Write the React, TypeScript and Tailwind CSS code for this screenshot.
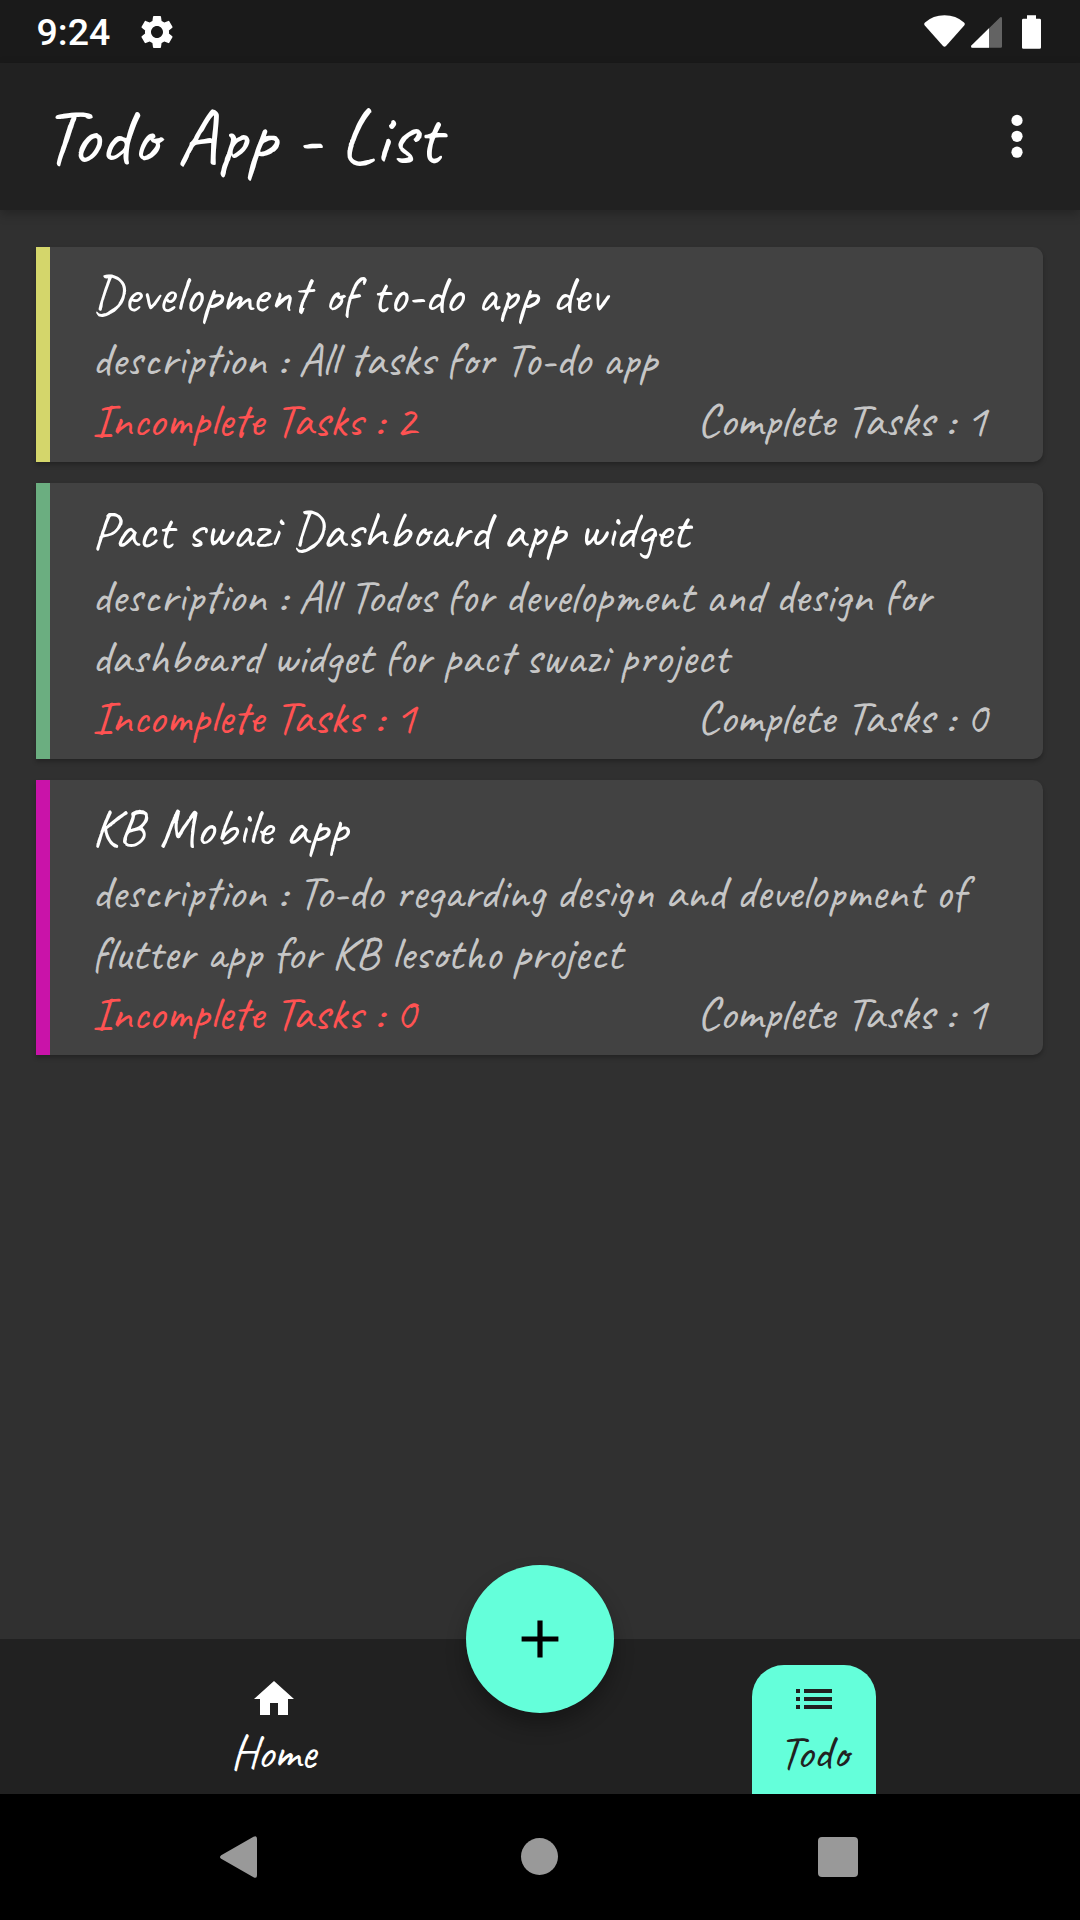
import React from "react";

type Todo = {
  bar: string;
  height: string;
  titleClass: string;
  countsClass: string;
  title: string;
  lines: string[];
  incomplete: number;
  complete: number;
};

const todos: Todo[] = [
  {
    bar: "bg-[#d4d66b]",
    height: "h-[215px]",
    titleClass: "leading-[68px] [word-spacing:1.2px]",
    countsClass: "",
    title: "Development of to-do app dev",
    lines: ["description : All tasks for To-do app"],
    incomplete: 2,
    complete: 1,
  },
  {
    bar: "bg-[#6bae80]",
    height: "h-[276px]",
    titleClass: "leading-[69px] [word-spacing:0.3px]",
    countsClass: "-mt-px",
    title: "Pact swazi Dashboard app widget",
    lines: [
      "description : All Todos for development and design for",
      "dashboard widget for pact swazi project",
    ],
    incomplete: 1,
    complete: 0,
  },
  {
    bar: "bg-[#c913a9]",
    height: "h-[275px]",
    titleClass: "leading-[68px]",
    countsClass: "-mt-px",
    title: "KB Mobile app",
    lines: [
      "description : To-do regarding design and development of",
      "flutter app for KB lesotho project",
    ],
    incomplete: 0,
    complete: 1,
  },
];

function TodoCard({ todo }: { todo: Todo }) {
  return (
    <article
      className={`flex ${todo.height} w-[1007px] rounded-r-[10px] bg-[#424242] shadow-[0_3px_4px_rgba(0,0,0,0.25)]`}
    >
      <div className={`w-[14px] ${todo.bar}`} />
      <div className="flex-1 pt-[14px] pr-[56px] pl-[42px] text-[47.25px] leading-[61px] whitespace-nowrap text-[#c6c6c6]">
        <h2 className={`text-[52.5px] font-medium text-white ${todo.titleClass}`}>{todo.title}</h2>
        {todo.lines.map((line) => (
          <p key={line}>{line}</p>
        ))}
        <div className={`flex justify-between ${todo.countsClass}`}>
          <span className="text-[#ff5252]">Incomplete Tasks : {todo.incomplete}</span>
          <span>Complete Tasks : {todo.complete}</span>
        </div>
      </div>
    </article>
  );
}

function StatusBar() {
  return (
    <div className="flex h-[63px] items-center bg-[#1a1a1a] pr-[39px] pl-[36.5px] text-white">
      <span className="w-[73px] pt-[2px] font-['Roboto'] text-[37.5px] leading-[61px] font-medium">9:24</span>
      <svg className="ml-[27.5px] h-[40px] w-[40px]" viewBox="0 0 24 24" fill="currentColor">
        <path d="M19.14 12.94c.04-.3.06-.61.06-.94 0-.32-.02-.64-.07-.94l2.03-1.58a.49.49 0 0 0 .12-.61l-1.92-3.32a.488.488 0 0 0-.59-.22l-2.39.96c-.5-.38-1.03-.7-1.62-.94l-.36-2.54a.484.484 0 0 0-.48-.41h-3.84c-.24 0-.43.17-.47.41l-.36 2.54c-.59.24-1.13.57-1.62.94l-2.39-.96c-.22-.08-.47 0-.59.22L2.74 8.87c-.12.21-.08.47.12.61l2.03 1.58c-.05.3-.09.63-.09.94s.02.64.07.94l-2.03 1.58a.49.49 0 0 0-.12.61l1.92 3.32c.12.22.37.29.59.22l2.39-.96c.5.38 1.03.7 1.62.94l.36 2.54c.05.24.24.41.48.41h3.84c.24 0 .44-.17.47-.41l.36-2.54c.59-.24 1.13-.56 1.62-.94l2.39.96c.22.08.47 0 .59-.22l1.92-3.32c.12-.22.07-.47-.12-.61l-2.01-1.58zM12 15.6c-1.98 0-3.6-1.62-3.6-3.6s1.62-3.6 3.6-3.6 3.6 1.62 3.6 3.6-1.62 3.6-3.6 3.6z" />
      </svg>
      <svg className="ml-auto h-[34px] w-[117px]" viewBox="924 14 117 34" fill="currentColor">
        <path d="M925 21.5Q933 14.3 944.5 14.3T964 21.5Q965.5 23 964.2 24.5L946 45Q944.5 46.6 943 45L924.8 24.5Q923.5 23 925 21.5Z" />
        <path d="M1002 17.5v28q0 1.3-1.3 1.3H972.5q-2.5-.3-.8-2.5L1000 16.5q1.7-1.2 2 1Z" opacity=".32" />
        <path d="M989 27.3V46.8H972.5q-2.5-.3-.8-2.5Z" />
        <path d="M1027 14.2h9v3.600h3.600q1.400 0 1.400 1.400v27.200q0 1.400-1.400 1.400h-16.200q-1.400 0-1.400-1.400V19.200q0-1.400 1.400-1.400h3.600Z" />
      </svg>
    </div>
  );
}

export default function App() {
  return (
    <div className="flex h-[1920px] w-[1080px] flex-col overflow-hidden bg-[#303030] font-['Caveat','Lato',cursive]">
      <StatusBar />
      <header className="z-10 flex h-[147px] items-center justify-between bg-[#212121] pr-[57px] pl-[42px] shadow-[0_4px_10px_rgba(0,0,0,0.25)]">
        <h1 className="pt-px text-[78.75px] leading-[146px] font-medium whitespace-nowrap text-white">
          Todo App - List
        </h1>
        <svg className="-mt-px h-[44px] w-[12px]" viewBox="0 0 12 44" fill="white">
          <circle cx="6" cy="6.4" r="5.6" />
          <circle cx="6" cy="22.3" r="5.6" />
          <circle cx="6" cy="38.2" r="5.6" />
        </svg>
      </header>

      <main className="flex flex-1 flex-col gap-[21px] pt-[37px] pl-[36px]">
        {todos.map((t) => (
          <TodoCard key={t.title} todo={t} />
        ))}
      </main>

      <nav className="relative flex h-[155px] items-end justify-between bg-[#212121] pr-[204px] pl-[230px]">
        <div className="flex h-[129px] w-[88px] flex-col items-center pt-[10px] text-white">
          <svg className="h-[48px] w-[48px]" viewBox="0 0 24 24" fill="currentColor">
            <path d="M10 20v-6h4v6h5v-8h3L12 3 2 12h3v8z" />
          </svg>
          <span className="-mt-px mr-[2px] text-[47.25px] leading-[61px]">Home</span>
        </div>
        <div className="flex h-[129px] w-[124px] flex-col items-center rounded-t-[32px] bg-[#64ffda] pt-[10px] text-[#212121]">
          <svg className="h-[48px] w-[48px]" viewBox="0 0 24 24" fill="currentColor">
            <path d="M3 13h2v-2H3v2zm0 4h2v-2H3v2zm0-8h2V7H3v2zm4 4h14v-2H7v2zm0 4h14v-2H7v2zM7 7v2h14V7H7z" />
          </svg>
          <span className="-mt-px mr-px text-[47.25px] leading-[61px]">Todo</span>
        </div>
        <button className="absolute top-[-74px] left-[466px] flex h-[148px] w-[148px] items-center justify-center rounded-full bg-[#64ffda] text-black shadow-[0_12px_20px_rgba(0,0,0,0.3)]">
          <svg className="h-[64px] w-[64px]" viewBox="0 0 24 24" fill="currentColor">
            <path d="M18.900 12.970H12.970V18.900H11.030V12.970H5.100V11.030H11.030V5.100H12.970V11.030H18.900Z" />
          </svg>
        </button>
      </nav>

      <footer className="flex h-[126px] items-center bg-black pl-[220px]">
        <svg className="h-[42px] w-[37px]" viewBox="0 0 37 42" fill="#999999">
          <path d="M1.2 19.2 33.5.8q3.5-1.8 3.5 2v36.4q0 3.8-3.5 2L1.2 22.8q-2.4-1.8 0-3.6Z" />
        </svg>
        <div className="-mt-px ml-[264px] h-[37px] w-[37px] rounded-full bg-[#999999]" />
        <div className="ml-[260px] h-[40px] w-[40px] rounded-[4px] bg-[#999999]" />
      </footer>
    </div>
  );
}
